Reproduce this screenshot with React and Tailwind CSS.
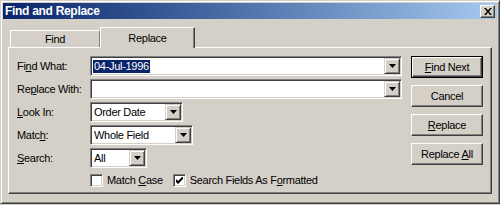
import React from 'react';

const FONT = { fontFamily: '"Liberation Sans", Arial, sans-serif' };

const U = ({ children }) => <span className="underline underline-offset-[1px]">{children}</span>;

const Arrow = () => (
  <svg width="7" height="4" viewBox="0 0 7 4">
    <path d="M0 0h7L3.5 4z" fill="#000" />
  </svg>
);

const DropBtn = () => (
  <div className="h-full w-[16px] shrink-0 flex items-center justify-center bg-[#d4d0c8] border border-t-[#d4d0c8] border-l-[#d4d0c8] border-r-[#404040] border-b-[#404040] shadow-[inset_1px_1px_0_#fff,inset_-1px_-1px_0_#808080]">
    <Arrow />
  </div>
);

const Field = ({ width, value, selected, combo = true }) => (
  <div
    className={`h-[20px] ${width} flex items-stretch bg-white border border-t-[#808080] border-l-[#808080] border-r-white border-b-white shadow-[inset_1px_1px_0_#404040,inset_-1px_-1px_0_#d4d0c8] p-[1px]`}
  >
    <div className="flex-1 flex items-center pl-[1px] overflow-hidden">
      {value && (
        <span className={selected ? 'bg-[#0a246a] text-white px-[1px] leading-[13px]' : 'pl-[1px]'}>{value}</span>
      )}
    </div>
    {combo && <DropBtn />}
  </div>
);

const Button = ({ children, primary }) => (
  <div
    className={`w-[72px] h-[22px] flex items-center justify-center ${
      primary ? 'border border-black' : ''
    }`}
  >
    <div className="w-full h-full flex items-center justify-center bg-[#d4d0c8] border border-t-white border-l-white border-r-[#404040] border-b-[#404040] shadow-[inset_-1px_-1px_0_#808080]">
      {children}
    </div>
  </div>
);

const Check = ({ checked }) => (
  <div className="w-[13px] h-[13px] bg-white border border-t-[#808080] border-l-[#808080] border-r-white border-b-white shadow-[inset_1px_1px_0_#404040,inset_-1px_-1px_0_#d4d0c8] flex items-center justify-center">
    {checked && (
      <svg width="7" height="7" viewBox="0 0 7 7">
        <path d="M0 2l0 3l2 2l5-5v-3l-5 5z" fill="#000" />
      </svg>
    )}
  </div>
);

const Row = ({ label, children }) => (
  <div className="h-[20px] flex items-center">
    <div className="w-[73px] shrink-0">{label}</div>
    {children}
  </div>
);

export default function App() {
  return (
    <div className="w-[500px] h-[205px] bg-[#d4d0c8] text-[11px] text-black tracking-[-0.3px]" style={FONT}>
      <div className="w-[500px] h-[204px] flex flex-col border border-t-[#d4d0c8] border-l-[#d4d0c8] border-r-[#404040] border-b-[#404040] shadow-[inset_1px_1px_0_#fff,inset_-1px_-1px_0_#808080] p-[2px]">
        {/* title bar */}
        <div className="h-[16px] flex items-center justify-between bg-gradient-to-r from-[#0a246a] to-[#a6caf0] pl-[2px] pr-[2px]">
          <span className="text-white font-bold text-[12px] tracking-[-0.3px]">Find and Replace</span>
          <div className="w-[15px] h-[13px] bg-[#d4d0c8] flex items-center justify-center border border-t-white border-l-white border-r-[#404040] border-b-[#404040] shadow-[inset_-1px_-1px_0_#808080]">
            <svg width="8" height="7" viewBox="0 0 8 7">
              <path d="M0 0h2l2 2.5L6 0h2L5 3.5 8 7H6L4 4.5 2 7H0l3-3.5z" fill="#000" />
            </svg>
          </div>
        </div>

        {/* tabs */}
        <div className="flex items-end h-[26px] pl-[5px] mt-[2px]">
          <div className="w-[90px] h-[17px] ml-[2px] flex items-center justify-center border-t border-l border-t-white border-l-white border-r border-r-[#808080]">
            Find
          </div>
          <div className="w-[95px] h-[21px] -mb-px relative z-10 bg-[#d4d0c8] flex items-start pt-[2px] justify-center border-t border-l border-t-white border-l-white border-r border-r-[#404040] shadow-[inset_-1px_0_0_#808080]">
            Replace
          </div>
        </div>

        {/* panel */}
        <div className="mx-[5px] h-[147px] border border-t-white border-l-white border-r-[#404040] border-b-[#404040] shadow-[inset_-1px_-1px_0_#808080] pt-[8px] pl-[8px] flex">
          <div className="flex flex-col gap-[3px] w-[385px] shrink-0">
            <Row label={<>Fi<U>n</U>d What:</>}>
              <Field width="w-[312px]" value="04-Jul-1996" selected />
            </Row>
            <Row label={<>Re<U>p</U>lace With:</>}>
              <Field width="w-[312px]" />
            </Row>
            <Row label={<><U>L</U>ook In:</>}>
              <Field width="w-[93px]" value="Order Date" />
            </Row>
            <Row label={<>Matc<U>h</U>:</>}>
              <Field width="w-[103px]" value="Whole Field" />
            </Row>
            <Row label={<><U>S</U>earch:</>}>
              <Field width="w-[57px]" value="All" />
            </Row>
            <div className="h-[16px] flex items-center pl-[73px] mt-[1px]">
              <Check />
              <span className="ml-[4px]">Match <U>C</U>ase</span>
              <div className="ml-[10px]">
                <Check checked />
              </div>
              <span className="ml-[4px]">Search Fields As F<U>o</U>rmatted</span>
            </div>
          </div>
          <div className="ml-[9px] flex flex-col gap-[7px]">
            <Button primary><span><U>F</U>ind Next</span></Button>
            <Button>Cancel</Button>
            <Button><span><U>R</U>eplace</span></Button>
            <Button><span>Replace <U>A</U>ll</span></Button>
          </div>
        </div>
      </div>
    </div>
  );
}
